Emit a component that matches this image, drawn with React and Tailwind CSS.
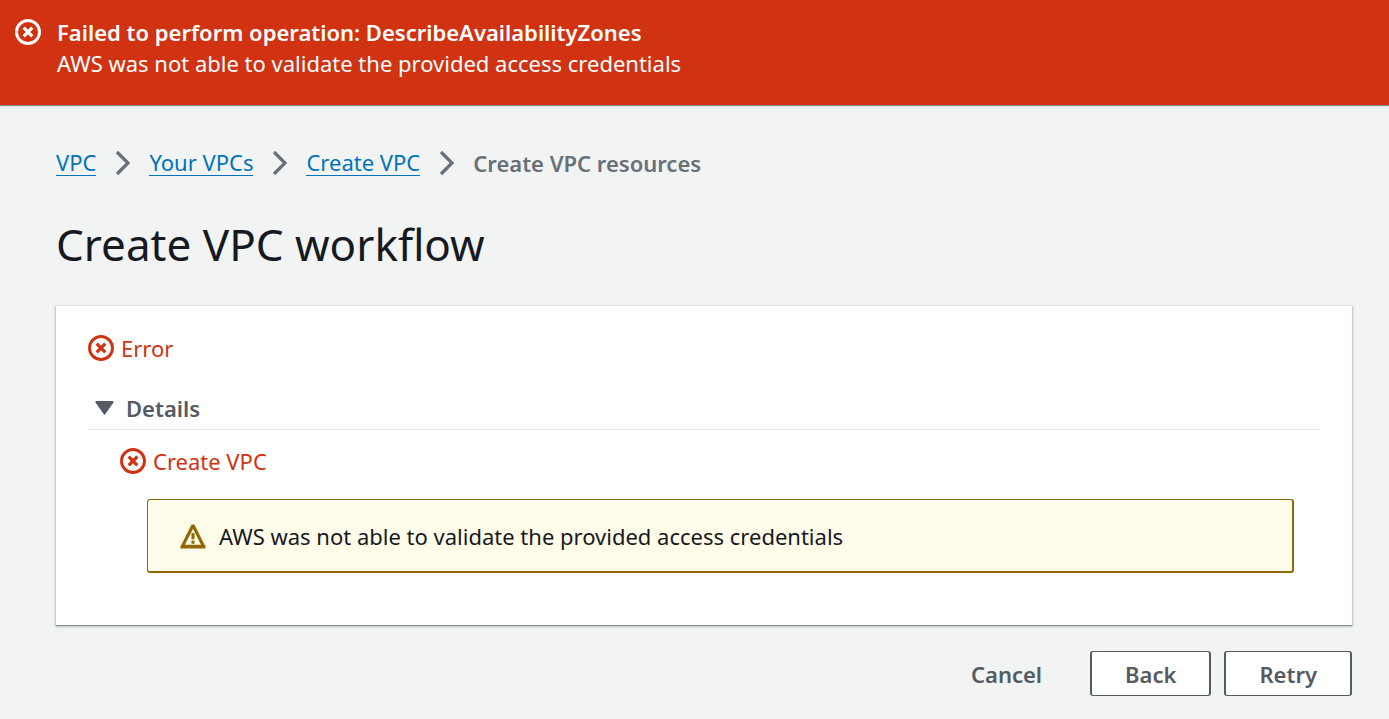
import { useState } from "react";

function ErrorIcon() {
  return (
    <svg className="size-[26px] shrink-0" viewBox="0 0 26 26" fill="none" stroke="currentColor" aria-hidden="true">
      <circle cx="13" cy="13" r="11.5" strokeWidth="2.9" />
      <path d="M8.7 8.7l8.6 8.6M17.3 8.7l-8.6 8.6" strokeWidth="3.3" />
    </svg>
  );
}

function WarningIcon() {
  return (
    <svg className="size-[26px] shrink-0 text-[#906806]" viewBox="0 0 26 26" fill="none" stroke="currentColor" aria-hidden="true">
      <path d="M13 2.2L23.6 23.4H2.4z" strokeWidth="3.2" strokeLinejoin="bevel" />
      <path d="M13 10v6.2M13 17.6v3.2" strokeWidth="3" />
      <path d="M.5 24h25" strokeWidth="3" />
    </svg>
  );
}

function Chevron() {
  return (
    <svg className="h-[26px] w-4 shrink-0 text-[#687078]" viewBox="0 0 16 26" fill="none" stroke="currentColor" aria-hidden="true">
      <path d="M2 2l11 11L2 24" strokeWidth="3.2" />
    </svg>
  );
}

const crumbs = ["VPC", "Your VPCs", "Create VPC"];

export default function App() {
  const [open, setOpen] = useState(true);
  return (
    <div className="min-h-screen bg-[#f2f3f3] font-['Noto_Sans',sans-serif] text-[22px] leading-8 text-[#16191f]">
      <div role="alert" className="flex gap-4 bg-[#d13212] px-[15px] pt-4 pb-[27px] text-white shadow-[0_1px_1px_0_#879596]">
        <span className="flex h-8 items-center"><ErrorIcon /></span>
        <div>
          <p className="font-semibold">Failed to perform operation: DescribeAvailabilityZones</p>
          <p className="leading-[30px]">AWS was not able to validate the provided access credentials</p>
        </div>
      </div>

      <main className="pt-[42px] pr-[37px] pb-[23px] pl-14">
        <nav aria-label="Breadcrumb">
          <ol className="flex items-center">
            {crumbs.map((c) => (
              <li key={c} className="flex items-center">
                <a href="#" className="border-b border-[#0073bb] leading-[25px] text-[#0073bb]">{c}</a>
                <span className="flex pr-[18px] pl-[19px]"><Chevron /></span>
              </li>
            ))}
            <li aria-current="page" className="font-semibold text-[#687078]">Create VPC resources</li>
          </ol>
        </nav>

        <h1 className="mt-[35px] text-[44px] leading-[60px]">Create VPC workflow</h1>

        <section className="mt-8 bg-white px-8 pt-[26px] pb-[52px] shadow-[0_1px_1px_0_#879596,0_1px_2px_1px_#c5cdce]">
          <p className="flex items-center gap-[7px] text-[#d13212]"><ErrorIcon />Error</p>
          <h2 className="mt-7 border-b border-[#eaeded] pb-[5px]">
            <button type="button" aria-expanded={open} onClick={() => setOpen(!open)} className="flex items-center gap-3 pl-[7px] font-semibold text-[#545b64]">
              <svg className={open ? "h-[14px] w-[19px]" : "h-[14px] w-[19px] -rotate-90"} viewBox="0 0 19 14" fill="currentColor" aria-hidden="true">
                <path d="M1.2 0h16.6q1.2.2.7 1.6L10 13.4q-.5.6-1 0L.5 1.6Q0 .2 1.2 0z" />
              </svg>
              Details
            </button>
          </h2>
          {open && (
            <div className="pt-[15px] pr-[26px] pl-8">
              <p className="flex items-center gap-[7px] text-[#d13212]"><ErrorIcon />Create VPC</p>
              <div className="mt-[22px] ml-[27px] flex items-center gap-[13px] rounded-[3px] border border-r-2 border-b-2 border-[#906806] bg-[#fffce9] px-8 pt-5 pb-[19px]">
                <WarningIcon />
                <p>AWS was not able to validate the provided access credentials</p>
              </div>
            </div>
          )}
        </section>

        <div className="mt-[26px] flex justify-end gap-[13px] text-[#545b64]">
          <button type="button" className="h-[45px] px-[35px] font-semibold">Cancel</button>
          <button type="button" className="h-[45px] rounded-[3px] border-x-2 border-y border-[#545b64] bg-white px-[33px] font-semibold">Back</button>
          <button type="button" className="h-[45px] rounded-[3px] border-x-2 border-y border-[#545b64] bg-white px-[33px] font-semibold">Retry</button>
        </div>
      </main>
    </div>
  );
}
